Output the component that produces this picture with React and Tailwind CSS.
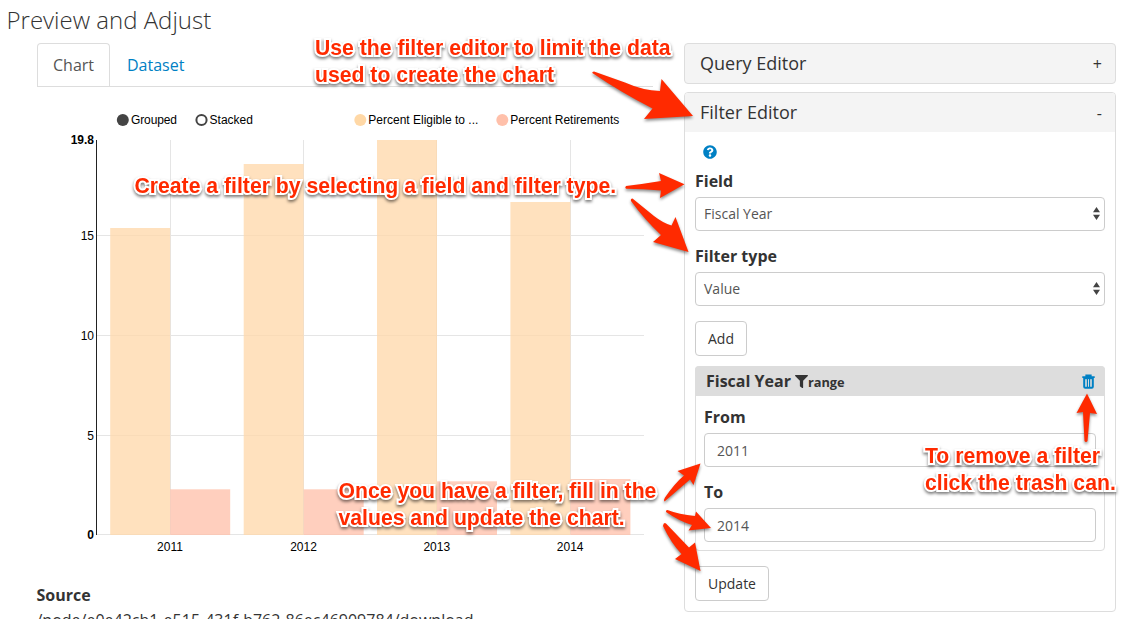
import React from "react";
import { FaQuestionCircle, FaFilter } from "react-icons/fa";

const years = [
  { label: "2011", x: 170, eligible: 228, retired: 489.3 },
  { label: "2012", x: 303.5, eligible: 164, retired: 489.3 },
  { label: "2013", x: 436.8, eligible: 140, retired: 481.3 },
  { label: "2014", x: 570.2, eligible: 202, retired: 479 },
];

const yTicks = [
  { label: "15", y: 235.5 },
  { label: "10", y: 335 },
  { label: "5", y: 435 },
];

function Chart() {
  return (
    <svg
      className="block h-[490px] w-[616px] font-['Liberation_Sans',Arial,sans-serif] text-[12px]"
      viewBox="37 87 616 490"
    >
      <g>
        <circle cx="122.8" cy="120" r="6" fill="#444" />
        <text x="131" y="124" textLength="46">Grouped</text>
        <circle cx="201.5" cy="120" r="5.1" fill="#fff" stroke="#444" strokeWidth="2" />
        <text x="209.5" y="124" textLength="43.5">Stacked</text>
        <circle cx="360.3" cy="120" r="6" fill="#ffd8a6" />
        <text x="368.3" y="124" textLength="110">Percent Eligible to ...</text>
        <circle cx="502.3" cy="120" r="6" fill="#ffc0aa" />
        <text x="510.3" y="124" textLength="109">Percent Retirements</text>
      </g>
      <g stroke="#e5e5e5" strokeWidth="1">
        {yTicks.map((t) => (
          <line key={t.label} x1="97" x2="644" y1={Math.floor(t.y) + 0.5} y2={Math.floor(t.y) + 0.5} />
        ))}
        <line x1="97" x2="644" y1="534.5" y2="534.5" />
        {years.map((d) => (
          <line key={d.label} x1={Math.floor(d.x) + 0.5} x2={Math.floor(d.x) + 0.5} y1="140" y2="535" />
        ))}
      </g>
      {years.map((d) => (
        <g key={d.label}>
          <rect x={d.x - 59.8} y={d.eligible} width="60" height={535 - d.eligible} fill="#ffd8aa" fillOpacity="0.77" />
          <rect x={d.x + 0.2} y={d.retired} width="60" height={535 - d.retired} fill="#ffc0aa" fillOpacity="0.77" />
          <text x={d.x} y="551" textAnchor="middle">{d.label}</text>
        </g>
      ))}
      <line x1="96.5" x2="96.5" y1="140" y2="535" stroke="#222" />
      <g textAnchor="end">
        {yTicks.map((t) => (
          <text key={t.label} x="94" y={t.y + 4.5}>{t.label}</text>
        ))}
        <text x="94" y="144.3" fontWeight="bold">19.8</text>
        <text x="94" y="539.3" fontWeight="bold">0</text>
      </g>
    </svg>
  );
}

function SelectBox({ label, value }) {
  return (
    <div>
      <div className="h-[27px] text-[16px] leading-[22px] font-bold">{label}</div>
      <div className="flex h-[34px] items-center justify-between rounded-[4px] border border-[#ccc] pr-[4px] pb-[2px] pl-2 text-[14px] text-[#555]">
        <span>{value}</span>
        <svg className="h-[13px] w-[7px]" viewBox="0 0 7 13" fill="#444">
          <path d="M3.5 0L7 5.2H0zM3.5 13L7 7.8H0z" />
        </svg>
      </div>
    </div>
  );
}

function InputBox({ label, value }) {
  return (
    <div>
      <div className="h-[27px] text-[16px] leading-[22px] font-bold">{label}</div>
      <div className="flex h-[34px] items-center rounded-[4px] border border-[#ccc] px-3 text-[14px] text-[#555]">
        {value}
      </div>
    </div>
  );
}

function TrashIcon() {
  return (
    <svg className="h-[15px] w-[13px]" viewBox="0 0 13 15" fill="none" stroke="#0080c4">
      <path d="M0.3 3.2h12.4M4.2 3V1.3h4.6V3" strokeWidth="1.7" />
      <path d="M2.2 3.5V12.7q0 1 1 1h6.600q1 0 1-1V3.5" strokeWidth="2" />
      <path d="M3 4.500h7" strokeWidth="1.4" />
      <path d="M5.400 5v8M7.600 5v8" strokeWidth="1.2" />
    </svg>
  );
}

const noteText =
  "absolute whitespace-nowrap font-['Liberation_Sans',Arial,sans-serif] text-[21.2px] font-bold leading-[27px] text-[#ff2a00] [-webkit-text-stroke:4px_white] [paint-order:stroke_fill] [filter:drop-shadow(0_2px_1.5px_rgba(0,0,0,0.5))]";

function Note({ className, lines }) {
  return (
    <div className={noteText + " " + className}>
      {lines.map((l) => (
        <div key={l}>{l}</div>
      ))}
    </div>
  );
}

function Arrows() {
  return (
    <svg
      className="pointer-events-none absolute inset-0 h-[619px] w-[1145px] [filter:drop-shadow(0_2px_1.5px_rgba(0,0,0,0.45))]"
      viewBox="0 0 1145 619"
      fill="#ff2a00"
    >
      <path d="M594 71.5Q592 71.5 592.3 73Q622 93 652.5 108.5L644 119L693 116L661.5 79L660 91Q643 90.500 625 82.500Z" />
      <path d="M626 186Q624.500 187.500 626 188.800Q643 189 661 190.500L660 198L684.500 184.300L659 173L661 181Q643 184 626 186Z" />
      <path d="M632.500 198.500Q630.300 198.500 631 201Q644 219 661 235L653 242L688.500 252L675.500 217L671.500 225.500Q663 223 654 216Z" />
      <path d="M664.500 501.500Q663.500 499.500 665 497.500Q675 483 684 475.500L677.500 471L700.500 463.500L693.500 485L690 479.500Q679 489 664.500 501.500Z" />
      <path d="M666 512Q665.500 510 667.500 510Q679 514.500 695 516L696 511.500L711 528L688.500 530.500L692 525Q679 521 666 512Z" />
      <path d="M663 526Q663.500 522 666 523.500Q677 535 689 547.500L695 542.500L700.500 571L675 559L681.500 554Q671 543 663 526Z" />
      <path d="M1084.500 441Q1086 443 1087.500 441L1090 413L1097 414L1087 393.500L1076.500 413L1083 412Z" />
    </svg>
  );
}

export default function App() {
  return (
    <div className="relative h-[619px] w-[1145px] overflow-hidden bg-white font-['Open_Sans','Noto_Sans',sans-serif] text-[#333]">
      <h1 className="h-[43px] pl-[6.5px] text-[24px] leading-[40px] font-light">Preview and Adjust</h1>
      <div className="flex items-start pl-[37px]">
        <main className="w-[616px] shrink-0">
          <nav className="flex h-[44px] border-b border-[#ddd] text-[16px] leading-[22px]">
            <div className="flex h-[43px] w-[73px] shrink-0 items-center justify-center rounded-t-[4px] border border-b-0 border-[#ddd] bg-white text-[#555]">
              Chart
            </div>
            <div className="flex h-[44px] items-center pl-[17px] text-[#0080c4]">Dataset</div>
          </nav>
          <Chart />
          <div className="-ml-[0.5px] pt-[7px] text-[16px]">
            <div className="h-[25px] leading-[22px] font-bold">Source</div>
            <div className="leading-[22px] whitespace-nowrap">/node/e0e42cb1-e515-431f-b762-86ec46909784/download</div>
          </div>
        </main>

        <aside className="ml-[31px] flex w-[432px] shrink-0 flex-col gap-2">
          <div className="flex h-[41px] items-center justify-between rounded-[4px] border border-[#ddd] bg-[#f4f4f4] pr-[13px] pl-[15px] text-[18px]">
            <span>Query Editor</span>
            <span className="text-[16px]">+</span>
          </div>
          <section className="h-[520px] rounded-[4px] border border-[#ddd]">
            <div className="flex h-[39px] items-center justify-between rounded-t-[3px] bg-[#f4f4f4] pr-[13px] pl-[15px] text-[18px]">
              <span>Filter Editor</span>
              <span className="text-[16px]">-</span>
            </div>
            <div className="px-[10px] pt-[13px]">
              <FaQuestionCircle className="ml-[7.5px] h-[14px] w-[14px] text-[#0080c4]" />
              <div className="flex flex-col gap-[14px] pt-[11px]">
                <SelectBox label="Field" value="Fiscal Year" />
                <SelectBox label="Filter type" value="Value" />
              </div>
              <div className="mt-[15px] flex h-[35px] w-[52px] items-center justify-center rounded-[4px] border border-[#ccc] text-[14px]">
                Add
              </div>
              <div className="mt-[10px] h-[185px] rounded-[4px] border border-[#ddd]">
                <div className="-mx-px -mt-px flex h-[30px] items-center rounded-t-[4px] bg-[#ddd] pr-[10px] pl-[11px] font-bold">
                  <span className="text-[16px]">Fiscal Year</span>
                  <FaFilter className="ml-[4px] h-[13px] w-[13px]" />
                  <span className="pt-[3px] text-[12.8px]">range</span>
                  <span className="ml-auto"><TrashIcon /></span>
                </div>
                <div className="flex flex-col gap-[14px] px-2 pt-[10px]">
                  <InputBox label="From" value="2011" />
                  <InputBox label="To" value="2014" />
                </div>
              </div>
              <div className="mt-[15px] flex h-[35px] w-[74px] items-center justify-center rounded-[4px] border border-[#ccc] text-[14px]">
                Update
              </div>
            </div>
          </section>
        </aside>
      </div>

      <Note
        className="top-[34px] left-[315px]"
        lines={["Use the filter editor to limit the data", "used to create the chart"]}
      />
      <Note
        className="top-[172px] left-[134.5px]"
        lines={["Create a filter by selecting a field and filter type."]}
      />
      <Note
        className="top-[477px] left-[338.5px]"
        lines={["Once you have a filter, fill in the", "values and update the chart."]}
      />
      <Note
        className="top-[442px] left-[925px]"
        lines={["To remove a filter", "click the trash can."]}
      />
      <Arrows />
    </div>
  );
}
